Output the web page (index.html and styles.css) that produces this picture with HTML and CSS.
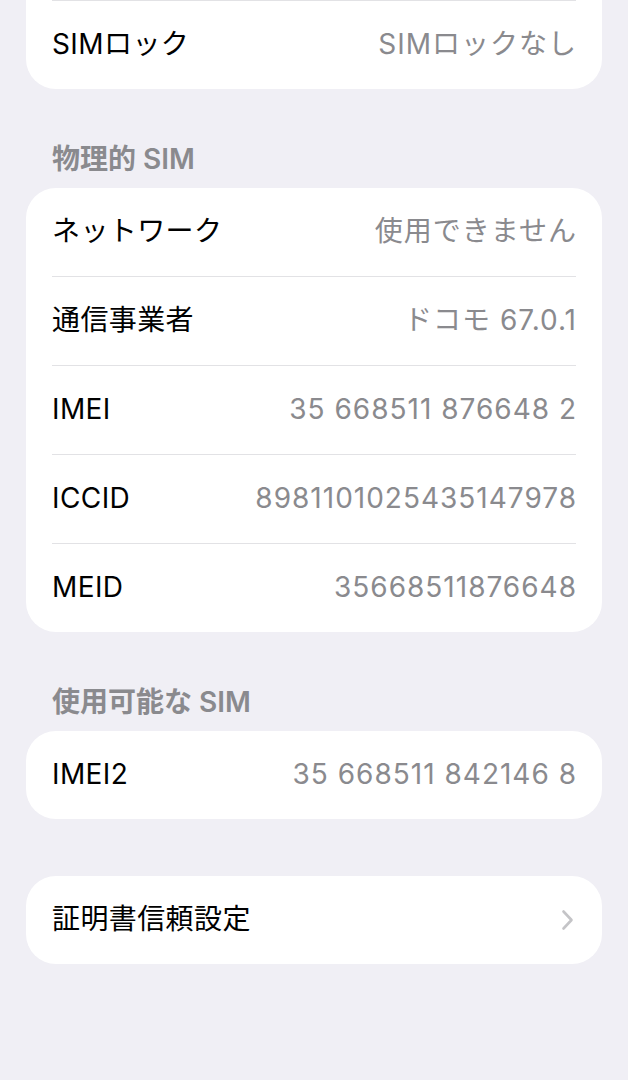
FILE: index.html
```html
<!DOCTYPE html>
<html lang="ja">
<head>
<meta charset="UTF-8">
<meta name="viewport" content="width=device-width, initial-scale=1.0">
<title>情報</title>
<link rel="stylesheet" href="styles.css">
</head>
<body>
<div class="page">
  <div class="card card-cut">
    <div class="row">
      <span class="label">SIMロック</span>
      <span class="value">SIMロックなし</span>
    </div>
  </div>

  <h2 class="section-title">物理的 SIM</h2>
  <div class="card">
    <div class="row">
      <span class="label">ネットワーク</span>
      <span class="value">使用できません</span>
    </div>
    <div class="row">
      <span class="label">通信事業者</span>
      <span class="value">ドコモ 67.0.1</span>
    </div>
    <div class="row">
      <span class="label">IMEI</span>
      <span class="value">35 668511 876648 2</span>
    </div>
    <div class="row">
      <span class="label">ICCID</span>
      <span class="value">8981101025435147978</span>
    </div>
    <div class="row">
      <span class="label">MEID</span>
      <span class="value">35668511876648</span>
    </div>
  </div>

  <h2 class="section-title">使用可能な SIM</h2>
  <div class="card">
    <div class="row">
      <span class="label">IMEI2</span>
      <span class="value">35 668511 842146 8</span>
    </div>
  </div>

  <div class="card card-spaced">
    <div class="row link">
      <span class="label">証明書信頼設定</span>
      <svg class="chevron" width="13" height="22" viewBox="0 0 13 22">
        <path d="M2.5 2.5 L10.5 11 L2.5 19.5" fill="none" stroke="#c4c4c7" stroke-width="2.6" stroke-linecap="round" stroke-linejoin="round"/>
      </svg>
    </div>
  </div>
</div>
</body>
</html>
```

FILE: styles.css
```css
body {
  margin: 0;
  padding: 0;
  background-color: #f0eff5;
  font-family: Inter, "Noto Sans CJK JP", sans-serif;
  color: #000;
}
.page {
  padding: 0 26px;
}
.card {
  background-color: #fff;
  border-radius: 30px;
  overflow: hidden;
}
.card-cut {
  border-top-left-radius: 0;
  border-top-right-radius: 0;
}
.card-cut .row {
  border-top: 1px solid #e2e2e5;
}
.card-spaced {
  margin-top: 57px;
}
.row {
  display: flex;
  justify-content: space-between;
  align-items: center;
  height: 88px;
  margin: 0 26px;
  font-size: 28px;
  line-height: 34px;
}
.row + .row {
  border-top: 1px solid #e2e2e5;
}
.label {
  letter-spacing: 0.4px;
  padding-bottom: 2px;
}
.value {
  color: #8a8a8e;
  letter-spacing: 1px;
  margin-right: -1px;
  padding-bottom: 2px;
}
.chevron {
  margin-right: 2px;
}
.section-title {
  margin: 53px 0 12px;
  padding: 0 26px;
  font-size: 28px;
  line-height: 34px;
  font-weight: 600;
  color: #8a8a8e;
}
```
